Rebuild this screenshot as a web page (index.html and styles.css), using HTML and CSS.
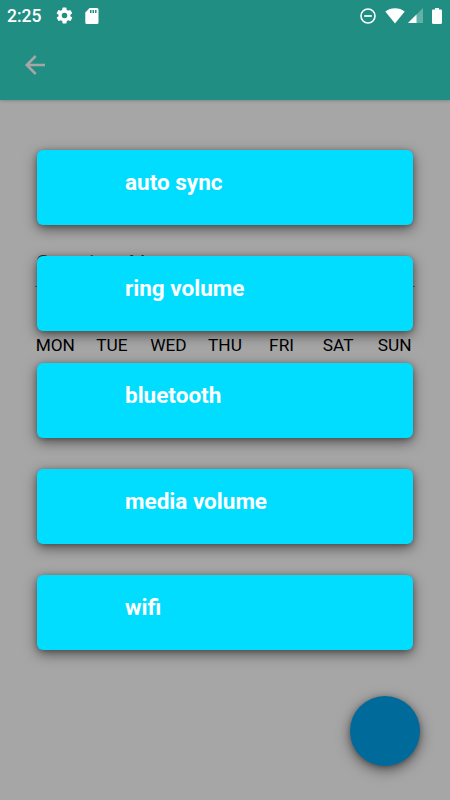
FILE: index.html
```
<!DOCTYPE html>
<html lang="en">
<head>
    <meta charset="UTF-8">
    <title>Session</title>
    <link rel="stylesheet" href="styles.css">
</head>
<body>
    <header class="app-header">
        <div class="status-bar">
            <span class="clock">2:25</span>
            <svg class="gear" width="19" height="19" viewBox="0 0 24 24"><path fill="#fff" d="M19.4 13a7.5 7.5 0 0 0 0-2l2.1-1.6a.5.5 0 0 0 .1-.6l-2-3.5a.5.5 0 0 0-.6-.2l-2.5 1a7.3 7.3 0 0 0-1.7-1l-.4-2.6a.5.5 0 0 0-.5-.5h-4a.5.5 0 0 0-.5.4L9 5.1a7.7 7.7 0 0 0-1.7 1l-2.5-1a.5.5 0 0 0-.6.2l-2 3.5a.5.5 0 0 0 .1.6L4.5 11a8 8 0 0 0 0 2l-2.1 1.6a.5.5 0 0 0-.1.6l2 3.5c.1.2.4.3.6.2l2.5-1a7.3 7.3 0 0 0 1.7 1l.4 2.6c0 .3.2.5.5.5h4c.2 0 .5-.2.5-.4l.4-2.7a7.7 7.7 0 0 0 1.7-1l2.5 1c.2.1.5 0 .6-.2l2-3.5a.5.5 0 0 0-.1-.6zM12 15.5a3.5 3.5 0 1 1 0-7 3.5 3.5 0 0 1 0 7z"/></svg>
            <svg class="sd-card" width="14" height="16" viewBox="0 0 14 16"><path fill="#fff" fill-rule="evenodd" d="M4.6 0H12a1.5 1.5 0 0 1 1.5 1.5v13A1.5 1.5 0 0 1 12 16H1.8a1.5 1.5 0 0 1-1.5-1.5V4.5zM5 2v3h1.5V2zm2.5 0v3H9V2zM10 2v3h1.5V2z"/></svg>
            <div class="system-icons">
                <svg width="16" height="16" viewBox="0 0 16 16"><circle cx="8" cy="8" r="7" fill="none" stroke="#fff" stroke-width="1.6"/><path stroke="#fff" stroke-width="1.7" d="M4.2 8h7.6"/></svg>
                <svg class="wifi" width="20" height="16" viewBox="0 0 20 16"><path fill="#fff" d="M10 15.5.3 3.6C3 1.5 6.3.3 10 .3s7 1.2 9.7 3.3z"/></svg>
                <svg class="signal" width="15" height="15" viewBox="0 0 15 15"><path fill="#fff" fill-opacity=".3" d="M0 15 15 0v15z"/><path fill="#fff" d="M0 15 8.5 6.5V15z"/></svg>
                <svg class="battery" width="10" height="16" viewBox="0 0 10 16"><path fill="#fff" d="M3 0h4v1.6h1.8c.7 0 1.2.5 1.2 1.2v12c0 .7-.5 1.2-1.2 1.2H1.2C.5 16 0 15.500 0 14.8v-12c0-.7.5-1.2 1.2-1.2H3z"/></svg>
            </div>
        </div>
        <div class="toolbar">
            <svg width="20" height="20" viewBox="0 0 20 20"><path fill="none" stroke="#a6a6a6" stroke-width="2.6" d="M20 10H2M10.7 1 1.8 10l8.9 9"/></svg>
        </div>
    </header>

    <main class="session-form">
        <div class="session-name">Session Name</div>
        <div class="days">
            <span>MON</span>
            <span>TUE</span>
            <span>WED</span>
            <span>THU</span>
            <span>FRI</span>
            <span>SAT</span>
            <span>SUN</span>
        </div>
    </main>

    <div class="overlay">
        <div class="card">auto sync</div>
        <div class="card">ring volume</div>
        <div class="card">bluetooth</div>
        <div class="card">media volume</div>
        <div class="card">wifi</div>
    </div>
    <div class="fab"></div>
</body>
</html>
```
FILE: styles.css
```
body {
    margin: 0;
    height: 800px;
    overflow: hidden;
    position: relative;
    background-color: #a6a6a6;
    font-family: Roboto, sans-serif;
}
.app-header {
    height: 99.5px;
    background-color: #208e83;
    box-shadow: 0 1px 3px rgba(0, 0, 0, 0.2);
}
.status-bar {
    display: flex;
    align-items: center;
    height: 31px;
    padding: 0 8px 0 7px;
    color: #fff;
}
.clock {
    width: 48px;
    font-size: 17.5px;
    font-weight: 500;
}
.sd-card {
    margin-left: 11px;
}
.system-icons {
    display: flex;
    align-items: center;
    margin-left: auto;
}
.wifi {
    margin-left: 9px;
}
.signal {
    margin-left: 3px;
}
.battery {
    margin-left: 9px;
}
.toolbar {
    display: flex;
    align-items: center;
    height: 68px;
    padding-left: 25px;
}
.session-form {
    padding: 147.5px 27px 0;
}
.session-name {
    height: 39px;
    margin: 0 8px;
    padding-left: 1px;
    line-height: 34px;
    border-bottom: 1px solid #287d88;
    font-size: 24.5px;
    color: #333;
}
.days {
    display: grid;
    grid-template-columns: repeat(7, 1fr);
    margin-top: 47px;
    font-size: 17.3px;
    line-height: 22px;
    text-align: center;
    color: #000;
}
.overlay {
    position: absolute;
    top: 150px;
    left: 37px;
    right: 37px;
    display: grid;
    gap: 31.3px;
}
.card {
    height: 75px;
    padding-left: 88px;
    box-sizing: border-box;
    border-radius: 6px;
    background-color: #00ddff;
    box-shadow: 0 4px 13px rgba(0, 0, 0, 0.5), 0 1px 5px rgba(0, 0, 0, 0.25);
    color: #fff;
    font-size: 22.5px;
    font-weight: bold;
    line-height: 65px;
}
.fab {
    position: absolute;
    top: 696px;
    left: 350px;
    width: 70px;
    height: 70px;
    border-radius: 50%;
    background-color: #006b9b;
    box-shadow: 0 4px 14px rgba(0, 0, 0, 0.5), 0 1px 5px rgba(0, 0, 0, 0.25);
}
```
